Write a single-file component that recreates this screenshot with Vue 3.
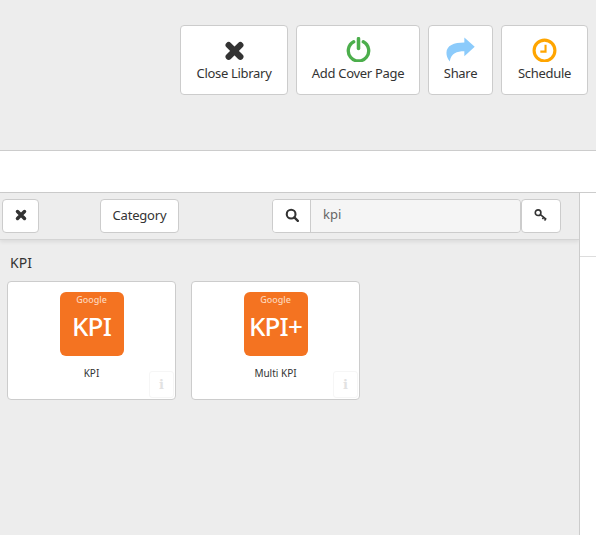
<template>
  <div class="page">
    <!-- top actions -->
    <div class="top-bar">
      <button v-for="a in actions" :key="a.label" class="action-btn" :style="{ width: a.width + 'px' }">
        <svg v-if="a.icon === 'close'" class="action-icon" viewBox="0 0 24 24">
          <path d="M6.400 7.800 17.600 19M17.600 7.800 6.400 19" stroke="#333" stroke-width="6" stroke-linecap="round" fill="none" />
        </svg>
        <svg v-else-if="a.icon === 'power'" class="action-icon" viewBox="0 0 24 24">
          <path d="M7.400 4.540a9.800 9.800 0 1 0 9.200 0" stroke="#4cae4c" stroke-width="3.200" stroke-linecap="round" fill="none" />
          <path d="M12 1.600v9.400" stroke="#4cae4c" stroke-width="3.400" stroke-linecap="round" fill="none" />
        </svg>
        <svg v-else-if="a.icon === 'share'" class="action-icon share-icon" viewBox="0 0 30 26">
          <path d="M19 .5 29.800 10.200 19 20V14.800C11 14.800 5.500 16.500 3.800 25.500 1 22 .4 19 .4 16.500.4 9 8 5.800 19 5.800Z" fill="#8ccbfb" />
        </svg>
        <svg v-else class="action-icon" viewBox="0 0 24 24">
          <circle cx="12" cy="13" r="10" stroke="#ffa500" stroke-width="3" fill="none" />
          <path d="M13 7.500V14H8" stroke="#ffa500" stroke-width="2" fill="none" />
        </svg>
        <span class="action-label">{{ a.label }}</span>
      </button>
    </div>

    <div class="white-band"></div>

    <div class="main">
      <div class="library">
        <!-- filter row -->
        <div class="toolbar">
          <button class="tool-btn clear-btn">
            <svg class="tool-icon" viewBox="0 0 24 24">
              <path d="M6 6 18 18M18 6 6 18" stroke="#333" stroke-width="6" stroke-linecap="round" fill="none" />
            </svg>
          </button>
          <button class="tool-btn category-btn">Category</button>
          <div class="search-group">
            <button class="search-btn">
              <svg class="tool-icon" viewBox="0 0 24 24">
                <circle cx="10.500" cy="10.500" r="7.500" stroke="#333" stroke-width="3.600" fill="none" />
                <path d="M16 16 22 22" stroke="#333" stroke-width="4" stroke-linecap="round" />
              </svg>
            </button>
            <div class="search-input">kpi</div>
          </div>
          <button class="tool-btn key-btn">
            <svg class="tool-icon" viewBox="0 0 24 24">
              <circle cx="7" cy="8" r="4.800" stroke="#333" stroke-width="2.800" fill="none" />
              <path d="M11 11.500 21 19.500M16.500 16 14.500 19M20 18.800 18 21.500" stroke="#333" stroke-width="2.800" fill="none" />
            </svg>
          </button>
        </div>

        <div class="section-title">KPI</div>

        <div class="cards">
          <div v-for="c in cards" :key="c.name" class="card">
            <div class="tile">
              <span class="tile-brand">Google</span>
              <span class="tile-name">{{ c.tile }}</span>
            </div>
            <div class="card-name">{{ c.name }}</div>
            <div class="info">i</div>
          </div>
        </div>
      </div>

      <div class="side">
        <div class="side-top"></div>
      </div>
    </div>
  </div>
</template>

<script setup>
const actions = [
  { label: 'Close Library', icon: 'close', width: 108 },
  { label: 'Add Cover Page', icon: 'power', width: 124 },
  { label: 'Share', icon: 'share', width: 65 },
  { label: 'Schedule', icon: 'clock', width: 87 }
]

const cards = [
  { name: 'KPI', tile: 'KPI' },
  { name: 'Multi KPI', tile: 'KPI+' }
]
</script>

<style>
html, body { margin: 0; background: #ededed; }
</style>

<style scoped>
.page { width: 596px; height: 535px; overflow: hidden; background: #ededed; font-family: "Noto Sans", "Open Sans", sans-serif; color: #333; }
button { font-family: inherit; color: #333; cursor: pointer; }

.top-bar { height: 150px; box-sizing: border-box; padding: 25px 0 0 180px; display: flex; gap: 8px; align-items: flex-start; }
.action-btn { flex: none; height: 70px; background: #fff; border: 1px solid #ccc; border-radius: 4px; font-size: 13px; letter-spacing: -0.3px; display: flex; flex-direction: column; align-items: center; padding: 11px 0 0; box-sizing: border-box; gap: 2px; white-space: nowrap; }
.action-icon { width: 25px; height: 25px; display: block; flex: none; }
.share-icon { width: 29px; }
.action-label { line-height: 18px; }

.white-band { height: 41px; background: #fff; border-top: 1px solid #ccc; border-bottom: 1px solid #ccc; }

.main { display: flex; height: 342px; }
.library { width: 579px; flex: none; }
.toolbar { height: 47px; box-sizing: border-box; border-bottom: 1px solid #d4d4d4; box-shadow: 0 2px 4px rgba(0,0,0,0.08); padding: 6px 0 0 2px; display: flex; align-items: flex-start; }
.tool-btn { height: 34px; background: #fff; border: 1px solid #ccc; border-radius: 4px; padding: 0 0 2px; font-size: 13px; letter-spacing: -0.2px; display: flex; align-items: center; justify-content: center; box-sizing: border-box; }
.clear-btn { width: 37px; margin-right: 61px; }
.category-btn { width: 79px; margin-right: 93px; }
.tool-icon { width: 14px; height: 14px; display: block; }

.search-group { display: flex; width: 249px; height: 34px; box-sizing: border-box; border: 1px solid #ccc; border-radius: 4px; overflow: hidden; }
.search-btn { width: 38px; flex: none; background: #fff; border: none; border-right: 1px solid #ccc; padding: 0 0 2px; display: flex; align-items: center; justify-content: center; }
.search-input { flex: 1; background: #f5f5f5; font-size: 13px; color: #666; padding: 5px 0 0 12px; box-sizing: border-box; }
.key-btn { width: 40px; }

.section-title { font-size: 14px; color: #333; margin: 13px 0 0 10px; line-height: 19px; }

.cards { display: flex; gap: 15px; margin: 9px 0 0 7px; }
.card { position: relative; width: 169px; height: 119px; box-sizing: border-box; background: #fff; border: 1px solid #ccc; border-radius: 4px; display: flex; flex-direction: column; align-items: center; padding-top: 10px; }
.tile { width: 64px; height: 64px; background: #f47321; border-radius: 6px; display: flex; flex-direction: column; align-items: center; color: #fff; }
.tile-brand { font-size: 9px; line-height: 11px; margin-top: 2px; color: #fdd5bb; font-weight: 500; }
.tile-name { font-size: 26px; line-height: 36px; margin-top: 3px; letter-spacing: -0.8px; white-space: nowrap; font-weight: 500; }
.card-name { font-size: 10px; line-height: 14px; margin-top: 10px; color: #333; }
.info { position: absolute; right: 1px; bottom: 1px; width: 25px; height: 27px; border: 1px solid #f6f6f6; border-radius: 3px; box-sizing: border-box; color: #e2e2e2; font-family: "DejaVu Serif", serif; font-weight: 700; font-size: 13px; text-align: center; line-height: 25px; }

.side { flex: 1; background: #fff; border-left: 1px solid #ccc; }
.side-top { height: 63px; border-bottom: 1px solid #ddd; }
</style>
